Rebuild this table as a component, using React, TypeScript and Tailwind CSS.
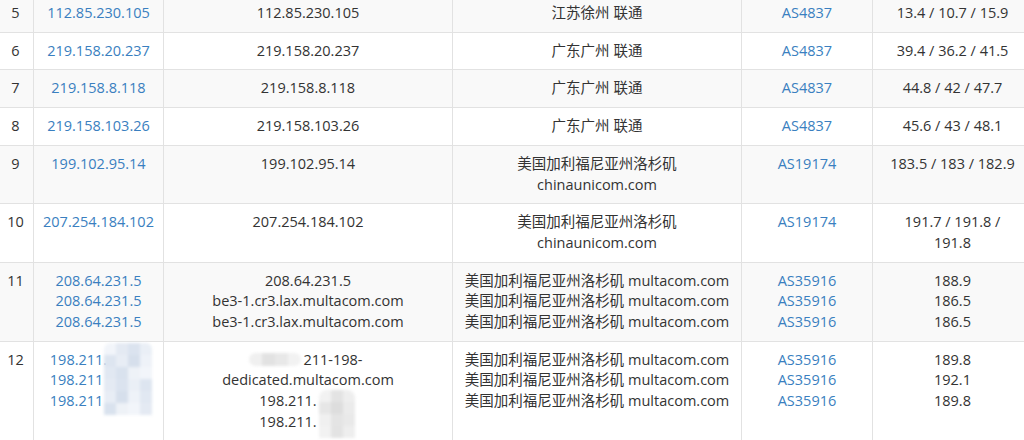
import React from "react";

const BLUE = "text-[#3a7fc0]";

type Cell = React.ReactNode;

function Mosaic({ cols, rows, size, colors, className }: { cols: number; rows: number; size: number; colors: string[]; className: string }) {
  const cells = [];
  for (let r = 0; r < rows; r++) {
    for (let c = 0; c < cols; c++) {
      cells.push(
        <div key={r * cols + c} style={{ width: size, height: size, background: colors[(r * cols + c) % colors.length] }} />
      );
    }
  }
  return (
    <div className={`absolute grid blur-[1.5px] ${className}`} style={{ gridTemplateColumns: `repeat(${cols}, ${size}px)` }}>
      {cells}
    </div>
  );
}

const rows: { n: string; ip: Cell; host: Cell; loc: Cell; as: Cell; lat: Cell }[] = [
  { n: "5", ip: "112.85.230.105", host: "112.85.230.105", loc: "江苏徐州 联通", as: "AS4837", lat: "13.4 / 10.7 / 15.9" },
  { n: "6", ip: "219.158.20.237", host: "219.158.20.237", loc: "广东广州 联通", as: "AS4837", lat: "39.4 / 36.2 / 41.5" },
  { n: "7", ip: "219.158.8.118", host: "219.158.8.118", loc: "广东广州 联通", as: "AS4837", lat: "44.8 / 42 / 47.7" },
  { n: "8", ip: "219.158.103.26", host: "219.158.103.26", loc: "广东广州 联通", as: "AS4837", lat: "45.6 / 43 / 48.1" },
  {
    n: "9",
    ip: "199.102.95.14",
    host: "199.102.95.14",
    loc: (
      <>
        美国加利福尼亚州洛杉矶
        <br />
        chinaunicom.com
      </>
    ),
    as: "AS19174",
    lat: "183.5 / 183 / 182.9",
  },
  {
    n: "10",
    ip: "207.254.184.102",
    host: "207.254.184.102",
    loc: (
      <>
        美国加利福尼亚州洛杉矶
        <br />
        chinaunicom.com
      </>
    ),
    as: "AS19174",
    lat: (
      <>
        191.7 / 191.8 /
        <br />
        191.8
      </>
    ),
  },
  {
    n: "11",
    ip: (
      <>
        208.64.231.5
        <br />
        208.64.231.5
        <br />
        208.64.231.5
      </>
    ),
    host: (
      <>
        208.64.231.5
        <br />
        be3-1.cr3.lax.multacom.com
        <br />
        be3-1.cr3.lax.multacom.com
      </>
    ),
    loc: (
      <>
        美国加利福尼亚州洛杉矶 multacom.com
        <br />
        美国加利福尼亚州洛杉矶 multacom.com
        <br />
        美国加利福尼亚州洛杉矶 multacom.com
      </>
    ),
    as: (
      <>
        AS35916
        <br />
        AS35916
        <br />
        AS35916
      </>
    ),
    lat: (
      <>
        188.9
        <br />
        186.5
        <br />
        186.5
      </>
    ),
  },
  {
    n: "12",
    ip: (
      <>
        198.211.<span className="inline-block w-[40px]" />
        <br />
        198.211<span className="inline-block w-[44px]" />
        <br />
        198.211<span className="inline-block w-[44px]" />
      </>
    ),
    host: (
      <>
        <span className="inline-block w-[50px]" />
        211-198-
        <br />
        dedicated.multacom.com
        <br />
        198.211.<span className="inline-block w-[40px]" />
        <br />
        198.211.<span className="inline-block w-[40px]" />
      </>
    ),
    loc: (
      <>
        美国加利福尼亚州洛杉矶 multacom.com
        <br />
        美国加利福尼亚州洛杉矶 multacom.com
        <br />
        美国加利福尼亚州洛杉矶 multacom.com
      </>
    ),
    as: (
      <>
        AS35916
        <br />
        AS35916
        <br />
        AS35916
      </>
    ),
    lat: (
      <>
        189.8
        <br />
        192.1
        <br />
        189.8
      </>
    ),
  },
];

export default function App() {
  const td = "border border-[#e2e2e2] px-[8px] pt-[8px] pb-[8px] align-top text-center relative";
  return (
    <div
      className="w-[1024px] h-[440px] overflow-hidden bg-white text-[#333333] text-[14.5px] leading-[20.7px]"
      style={{ fontFamily: '"Open Sans", "Noto Sans CJK SC", sans-serif' }}
    >
      <table className="table-fixed border-collapse w-[1043px] ml-[-11px] mt-[-6px]">
        <colgroup>
          <col className="w-[44px]" />
          <col className="w-[130px]" />
          <col className="w-[289px]" />
          <col className="w-[289px]" />
          <col className="w-[131px]" />
          <col className="w-[160px]" />
        </colgroup>
        <tbody>
          {rows.map((r, i) => (
            <tr key={r.n} className={i % 2 === 0 ? "bg-[#f9f9f9]" : "bg-white"}>
              <td className={`${td} pl-[10px] pr-[2px]`}>{r.n}</td>
              <td className={`${td} ${BLUE}`}>
                {r.ip}
                {r.n === "12" && (
                  <Mosaic
                    cols={4}
                    rows={6}
                    size={12}
                    className="left-[70px] top-[1px] rounded-t-[6px] overflow-hidden"
                    colors={["#f2f5fa", "#e4eaf3", "#dbe3ef", "#eaeff6", "#dde5f0", "#e8edf5", "#d6dfec", "#eef2f8", "#e1e8f2", "#d9e2ee", "#eef2f7"]}
                  />
                )}
              </td>
              <td className={td}>
                {r.host}
                {r.n === "12" && (
                  <>
                    <Mosaic
                      cols={4}
                      rows={1}
                      size={13}
                      className="left-[85px] top-[11px] rounded-full overflow-hidden"
                      colors={["#f0f0f0", "#e2e2e2", "#e8e8e8", "#f2f2f2"]}
                    />
                    <Mosaic
                      cols={3}
                      rows={4}
                      size={12}
                      className="left-[155px] top-[48px] rounded-t-[8px] overflow-hidden"
                      colors={["#f2f2f2", "#e3e3e3", "#eeeeee", "#e6e6e6", "#dddddd", "#ebebeb", "#f0f0f0", "#e4e4e4", "#e9e9e9"]}
                    />
                  </>
                )}
              </td>
              <td className={td}>{r.loc}</td>
              <td className={`${td} ${BLUE}`}>{r.as}</td>
              <td className={td}>{r.lat}</td>
            </tr>
          ))}
        </tbody>
      </table>
    </div>
  );
}
